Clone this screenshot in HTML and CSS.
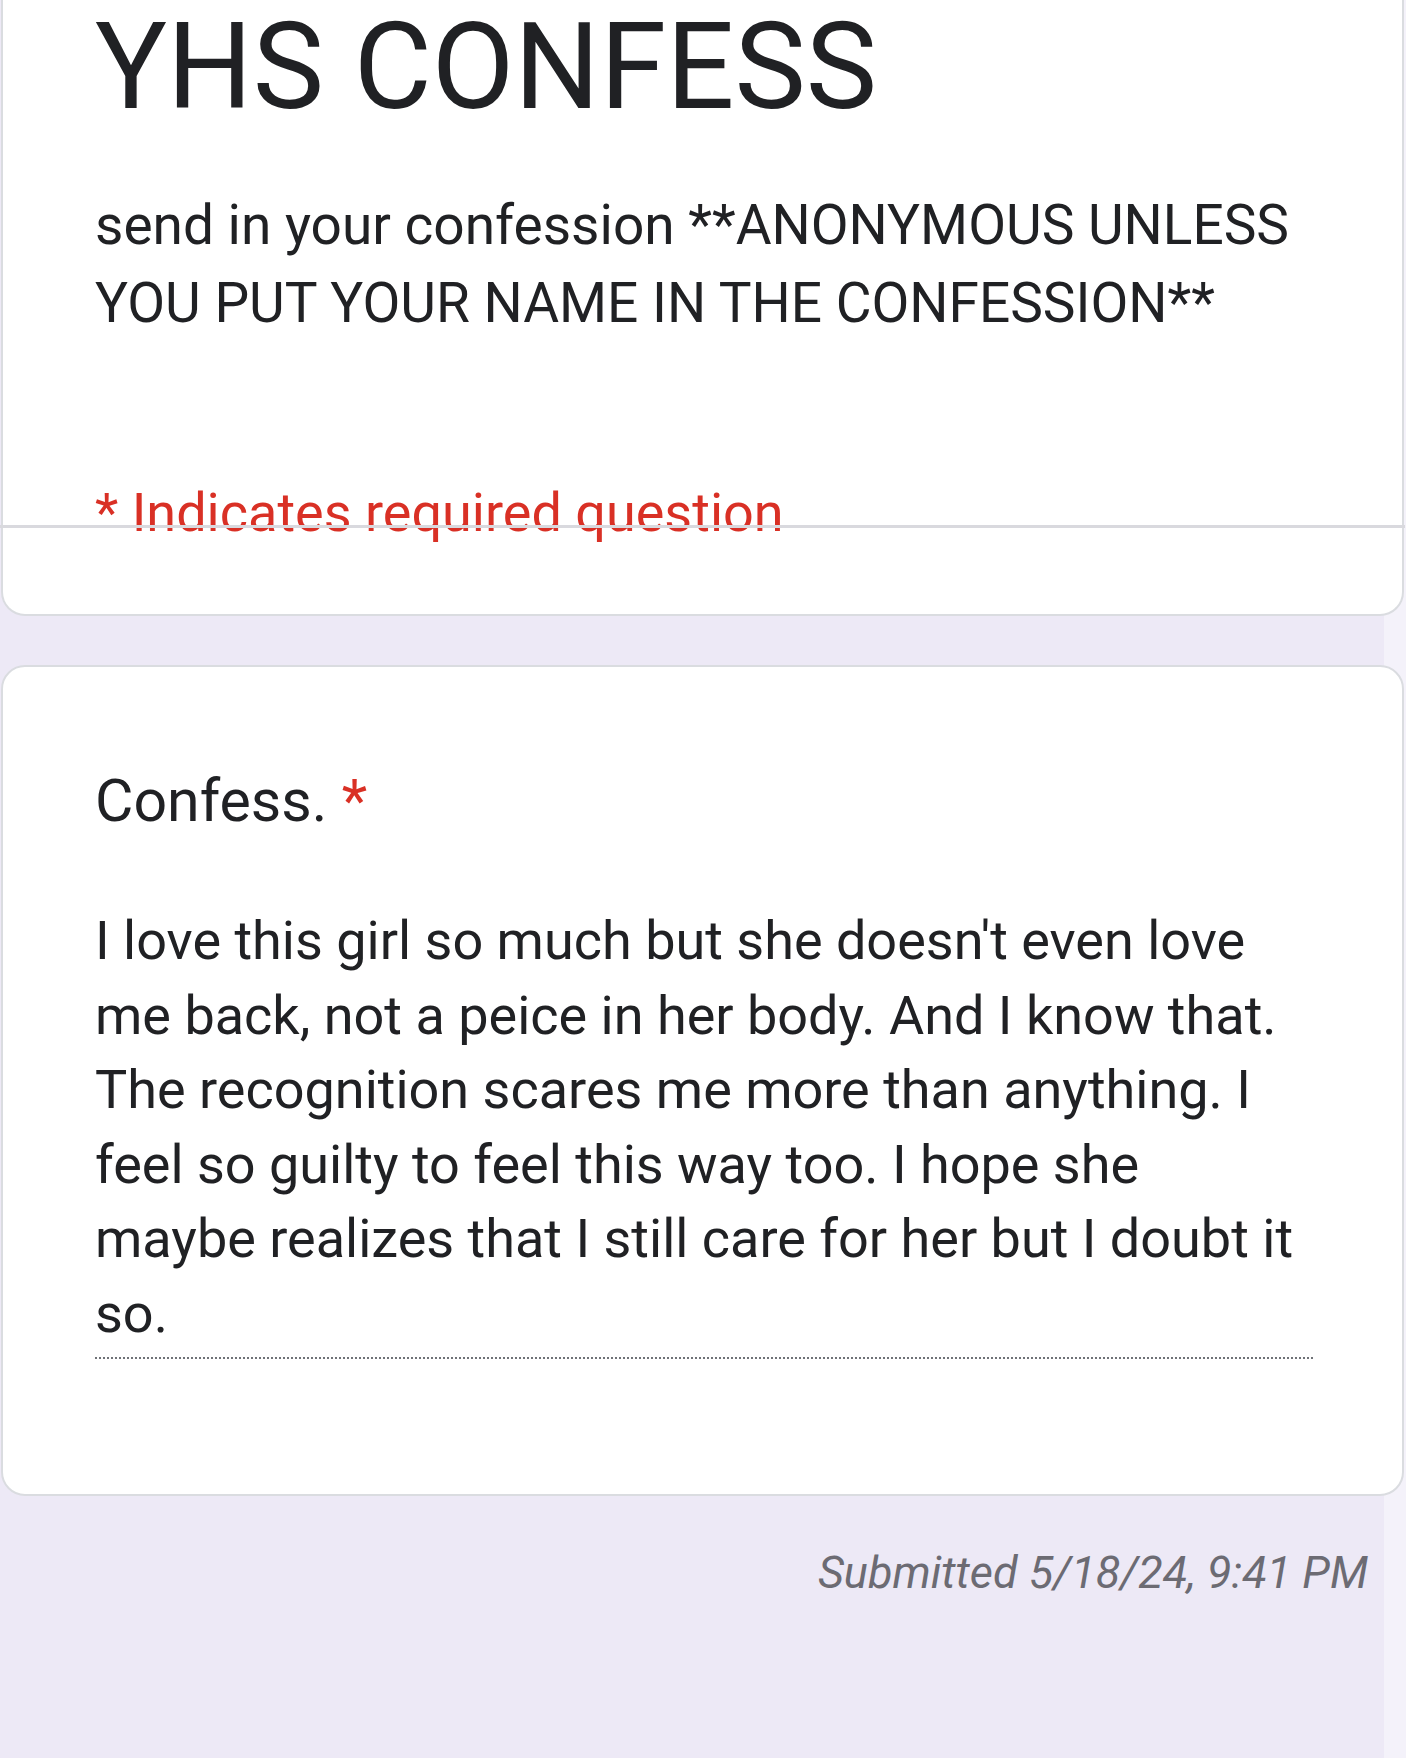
FILE: index.html
```
<!DOCTYPE html>
<html lang="en">
<head>
    <meta charset="UTF-8">
    <meta name="viewport" content="width=device-width, initial-scale=1.0">
    <title>YHS CONFESS</title>
    <link rel="stylesheet" href="styles.css">
</head>
<body>
    <div class="card header-card">
        <h1 class="form-title">YHS CONFESS</h1>
        <p class="form-desc">send in your confession **ANONYMOUS UNLESS YOU PUT YOUR NAME IN THE CONFESSION**</p>
        <div class="required-note">* Indicates required question</div>
        <div class="header-rule"></div>
    </div>

    <div class="card question-card">
        <div class="question-title">Confess. <span class="req">*</span></div>
        <div class="answer">I love this girl so much but she doesn't even love me back, not a peice in her body. And I know that. The recognition scares me more than anything. I feel so guilty to feel this way too. I hope she maybe realizes that I still care for her but I doubt it so.</div>
    </div>

    <div class="submitted">Submitted 5/18/24, 9:41 PM</div>
</body>
</html>
```
FILE: styles.css
```
body {
    font-family: Roboto, "Noto Sans", Arial, sans-serif;
    margin: 0;
    color: #202124;
    background: linear-gradient(to right, #ede9f6 1384px, #f4f2fa 1384px);
    min-height: 1758px;
}

.card {
    background-color: #fff;
    border: 2px solid #dadce0;
    border-radius: 24px;
    margin: 0 2px 0 1px;
    padding: 0 89px 0 92px;
}

.header-card {
    position: relative;
    border-top: none;
    border-radius: 0 0 24px 24px;
    padding-top: 2px;
    padding-bottom: 64px;
}

.form-title {
    font-size: 120px;
    font-weight: 400;
    line-height: 130px;
    margin: 0;
}

.form-desc {
    font-size: 55px;
    line-height: 78px;
    margin: 54px 0 0;
}

.required-note {
    color: #d93025;
    font-size: 54px;
    line-height: 74px;
    margin-top: 134px;
}

.header-rule {
    position: absolute;
    top: 525px;
    left: -3px;
    right: -3px;
    height: 3px;
    background-color: #d9d9de;
}

.question-card {
    margin-top: 49px;
    padding-top: 94px;
    padding-bottom: 135px;
}

.question-title {
    font-size: 59px;
    line-height: 80px;
}

.req {
    color: #d93025;
}

.answer {
    font-size: 54px;
    line-height: 74.6px;
    margin-top: 63px;
    padding: 0 9px 5px 0;
    border-bottom: 2px dotted #6f7277;
}

.submitted {
    font-size: 45px;
    font-style: italic;
    line-height: 60px;
    color: #6c6b73;
    text-align: right;
    margin-top: 47px;
    padding-right: 38px;
}
```
